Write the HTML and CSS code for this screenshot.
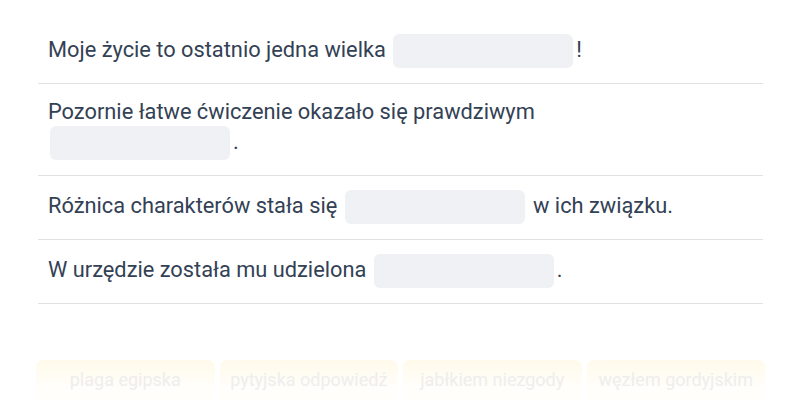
FILE: index.html
```html
<!DOCTYPE html>
<html lang="pl">
<head>
  <meta charset="UTF-8">
  <title>Uzupełnij zdania</title>
  <link rel="stylesheet" href="styles.css">
</head>
<body>
  <div class="exercise">
    <ul class="sentences">
      <li>Moje życie to ostatnio jedna wielka <span class="blank"></span>!</li>
      <li>Pozornie łatwe ćwiczenie okazało się prawdziwym <span class="blank"></span>.</li>
      <li>Różnica charakterów stała się <span class="blank"></span> w ich związku.</li>
      <li>W urzędzie została mu udzielona <span class="blank"></span>.</li>
    </ul>
    <div class="answers">
      <button class="answer">plaga egipska</button>
      <button class="answer">pytyjska odpowiedź</button>
      <button class="answer">jabłkiem niezgody</button>
      <button class="answer">węzłem gordyjskim</button>
    </div>
  </div>
</body>
</html>
```
FILE: styles.css
```css
:root {
  --text: #334155;
  --line: #e2e2e4;
  --blank: #f0f1f5;
}
* { box-sizing: border-box; margin: 0; padding: 0; }
body {
  background: #fff;
  font-family: Roboto, 'Noto Sans', sans-serif;
  color: var(--text);
}
.exercise {
  padding: 20px 37px 0 38px;
}
.sentences {
  list-style: none;
}
.sentences li {
  padding: 14px 45px 15px 10px;
  font-size: 21.8px;
  line-height: 28px;
  border-bottom: 1px solid var(--line);
}
.blank {
  display: inline-block;
  width: 180px;
  height: 34px;
  margin: 0 3px 0 2px;
  vertical-align: middle;
  background: var(--blank);
  border-radius: 6px;
}
.answers {
  display: grid;
  grid-template-columns: repeat(4, 1fr);
  gap: 5px;
  margin: 56px -2px 0 -2px;
}
.answer {
  height: 42px;
  border: none;
  border-radius: 7px;
  background: linear-gradient(#fffaea, #fffefb 70%);
  font-family: Roboto, 'Noto Sans', sans-serif;
  font-size: 18px;
  color: #eeeeee;
  white-space: nowrap;
  overflow: hidden;
  padding: 0 0 4px;
}
```
